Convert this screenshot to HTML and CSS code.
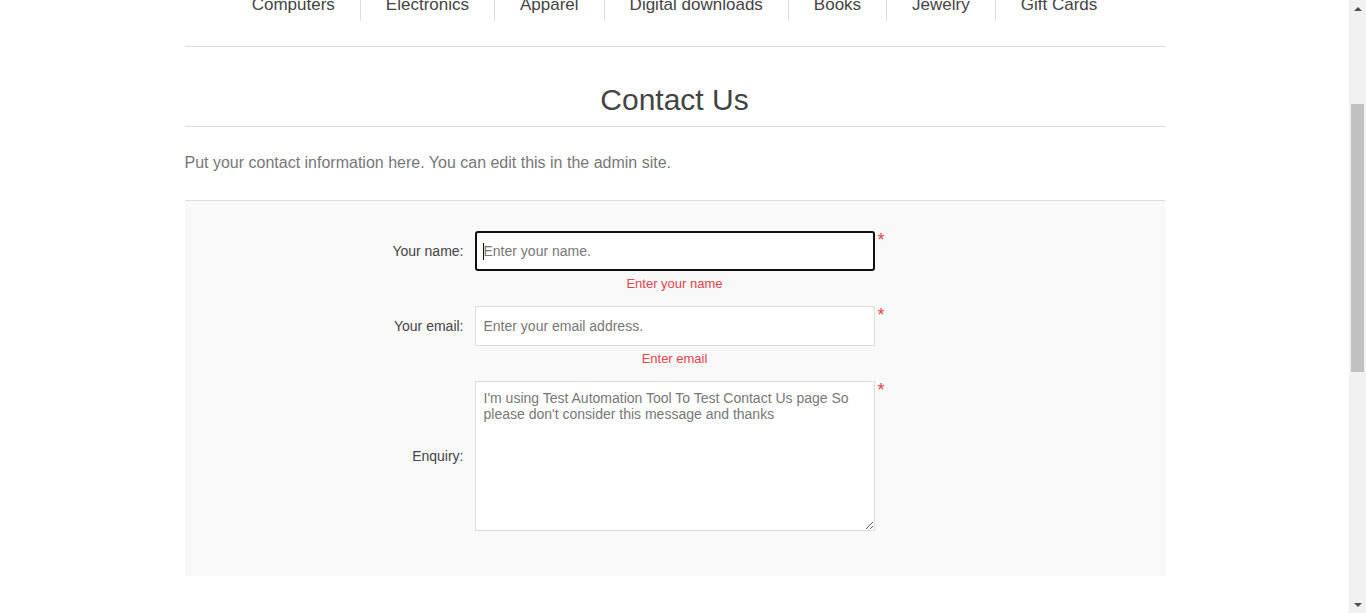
FILE: index.html
```html
<!DOCTYPE html>
<html lang="en">
<head>
<meta charset="utf-8">
<title>Contact Us</title>
<link rel="stylesheet" href="styles.css">
</head>
<body>
<div class="viewport">
  <main class="page">
    <div class="master">
      <nav class="header-menu">
        <ul class="menu-list">
          <li class="menu-item">Computers</li>
          <li class="menu-item">Electronics</li>
          <li class="menu-item">Apparel</li>
          <li class="menu-item">Digital downloads</li>
          <li class="menu-item">Books</li>
          <li class="menu-item">Jewelry</li>
          <li class="menu-item">Gift Cards</li>
        </ul>
      </nav>
      <div class="page-title"><h1 class="title">Contact Us</h1></div>
      <p class="topic-body">Put your contact information here. You can edit this in the admin site.</p>
      <form class="form-fields">
        <div class="field-row">
          <label class="field-label" for="fullname">Your name:</label>
          <div class="caret-wrap"><input id="fullname" class="field-input is-focused" type="text" placeholder="Enter your name."></div>
          <span class="required">*</span>
          <span class="field-error">Enter your name</span>
        </div>
        <div class="field-row">
          <label class="field-label" for="email">Your email:</label>
          <input id="email" class="field-input" type="text" placeholder="Enter your email address.">
          <span class="required">*</span>
          <span class="field-error">Enter email</span>
        </div>
        <div class="field-row field-row-last">
          <label class="field-label" for="enquiry">Enquiry:</label>
          <textarea id="enquiry" class="field-textarea">I'm using Test Automation Tool To Test Contact Us page So please don't consider this message and thanks</textarea>
          <span class="required">*</span>
        </div>
      </form>
    </div>
  </main>
  <aside class="scrollbar">
    <div class="sb-button"><span class="arrow-up"></span></div>
    <div class="sb-track"><div class="sb-thumb"></div></div>
    <div class="sb-button"><span class="arrow-down"></span></div>
  </aside>
</div>
</body>
</html>
```

FILE: styles.css
```css
* { box-sizing: border-box; }

html, body {
  margin: 0;
  padding: 0;
  height: 613px;
  overflow: hidden;
  background: #fff;
  font-family: "Liberation Sans", Arial, sans-serif;
  color: #444;
}

.viewport {
  display: flex;
  height: 613px;
}

.page {
  flex: 1;
  overflow: hidden;
}

.master {
  width: 980px;
  margin: 0 auto;
}

/* header menu (scrolled partially out of view) */
.header-menu {
  margin-top: -15px;
  border-bottom: 1px solid #ddd;
  padding-bottom: 25px;
}

.menu-list {
  list-style: none;
  margin: 0;
  padding: 0;
  display: flex;
  justify-content: center;
}

.menu-item {
  padding: 10px 25px 6px;
  font-size: 17px;
  line-height: 20px;
  color: #444;
}

.menu-item + .menu-item {
  border-left: 1px solid #ddd;
}

/* title */
.page-title {
  padding: 36px 10px 9px;
  border-bottom: 1px solid #ddd;
  text-align: center;
}

.title {
  margin: 0;
  font-size: 30px;
  line-height: 34px;
  font-weight: normal;
  color: #444;
}

.topic-body {
  margin: 25px 0 26px;
  font-size: 16px;
  line-height: 22px;
  color: #777;
}

/* form */
.form-fields {
  border-top: 1px solid #ddd;
  background: #f9f9f9;
  padding: 30px 15px;
}

.field-row {
  display: grid;
  grid-template-columns: 1fr 400px 1fr;
  align-items: center;
  margin-bottom: 14px;
}

.field-row-last {
  margin-bottom: 15px;
}

.field-label {
  grid-column: 1;
  grid-row: 1;
  text-align: right;
  padding-right: 11px;
  font-size: 14px;
  line-height: 18px;
  color: #444;
}

.field-input,
.caret-wrap {
  grid-column: 2;
  grid-row: 1;
}

.field-input {
  display: block;
  width: 400px;
  height: 40px;
  margin: 0;
  padding: 0 8px;
  border: 1px solid #ddd;
  border-radius: 0;
  background: #fff;
  font-family: "Liberation Sans", Arial, sans-serif;
  font-size: 14px;
  color: #777;
  outline: none;
}

.field-input::placeholder {
  color: #777;
  opacity: 1;
}

.field-input.is-focused {
  border: 2px solid #101010;
  border-radius: 3px;
  padding: 0 7px;
}

.caret-wrap {
  position: relative;
}

.caret-wrap::after {
  content: "";
  position: absolute;
  left: 8px;
  top: 12px;
  width: 1px;
  height: 17px;
  background: #111;
}

.field-textarea {
  grid-column: 2;
  grid-row: 1;
  display: block;
  width: 400px;
  height: 150px;
  margin: 0;
  padding: 8px;
  border: 1px solid #ddd;
  background: #fff;
  font-family: "Liberation Sans", Arial, sans-serif;
  font-size: 14px;
  line-height: 16px;
  color: #777;
  resize: vertical;
  outline: none;
}

.required {
  grid-column: 3;
  grid-row: 1;
  align-self: start;
  padding: 0 0 0 3px;
  font-size: 18px;
  line-height: 18px;
  color: #e4434b;
}

.field-error {
  grid-column: 2;
  grid-row: 2;
  margin-top: 4px;
  text-align: center;
  font-size: 13px;
  line-height: 17px;
  color: #e4434b;
}

/* fake scrollbar */
.scrollbar {
  width: 17px;
  flex: none;
  display: flex;
  flex-direction: column;
  background: #f1f1f1;
}

.sb-button {
  height: 17px;
  flex: none;
  display: flex;
  align-items: center;
  justify-content: center;
}

.sb-track {
  flex: 1;
  padding: 0 2px;
}

.sb-thumb {
  margin-top: 87px;
  height: 268px;
  background: #c1c1c1;
}

.arrow-up {
  width: 0;
  height: 0;
  border-left: 4px solid transparent;
  border-right: 4px solid transparent;
  border-bottom: 4px solid #505050;
}

.arrow-down {
  width: 0;
  height: 0;
  border-left: 4px solid transparent;
  border-right: 4px solid transparent;
  border-top: 4px solid #505050;
}
```
